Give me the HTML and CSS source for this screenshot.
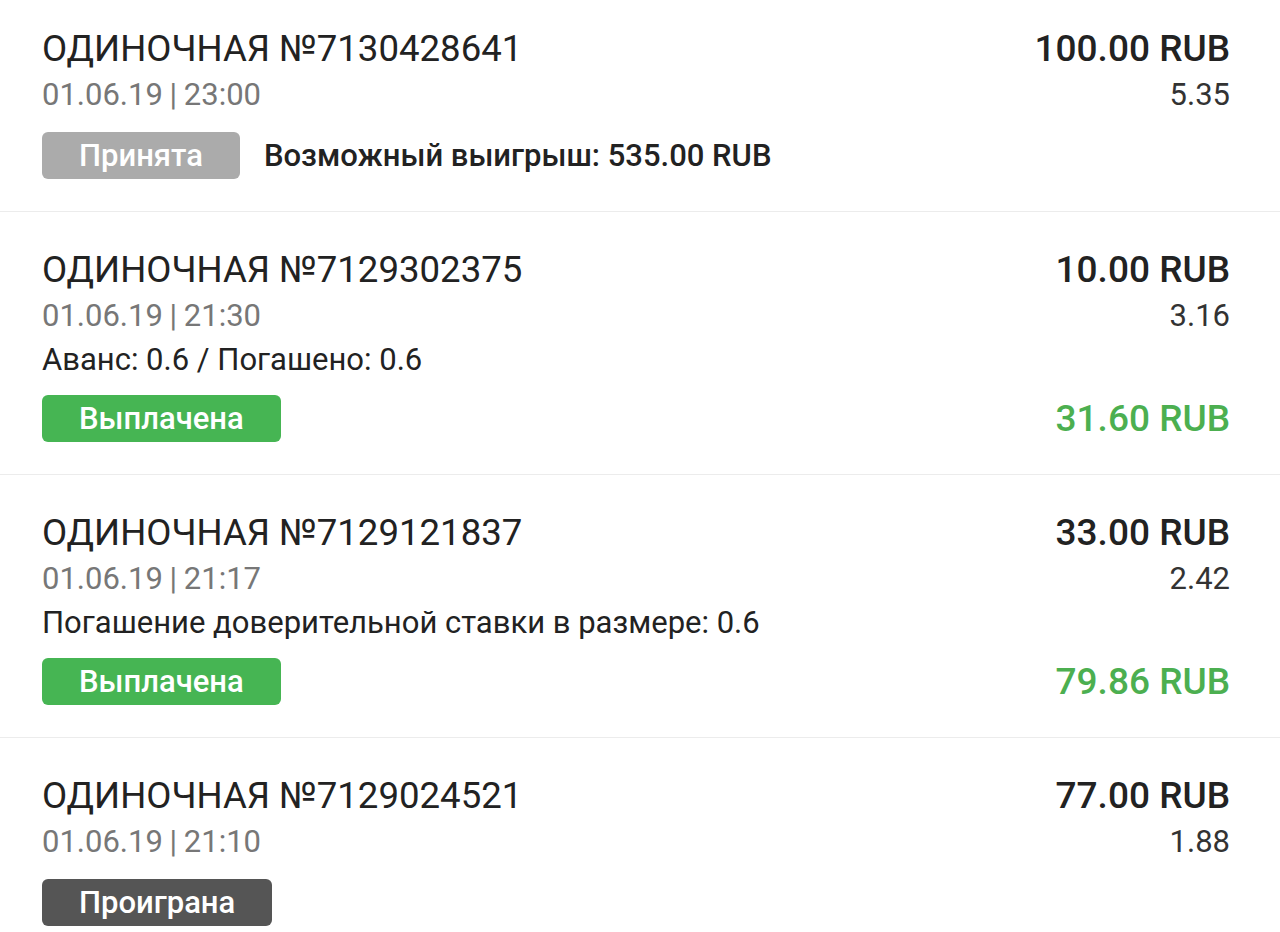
FILE: index.html
```html
<!DOCTYPE html>
<html lang="ru">
<head>
  <meta charset="UTF-8" />
  <title>История ставок</title>
  <link rel="stylesheet" href="styles.css">
</head>
<body>
  <div class="bets">
    <div class="bet first">
      <div class="bet-row">
        <div class="bet-title">ОДИНОЧНАЯ №7130428641</div>
        <div class="bet-sum">100.00 RUB</div>
      </div>
      <div class="bet-row">
        <div class="bet-date">01.06.19 | 23:00</div>
        <div class="bet-coef">5.35</div>
      </div>
      <div class="bet-row bet-foot">
        <div class="foot-left">
          <span class="badge badge-accepted">Принята</span>
          <span class="possible">Возможный выигрыш: 535.00 RUB</span>
        </div>
      </div>
    </div>

    <div class="bet">
      <div class="bet-row">
        <div class="bet-title">ОДИНОЧНАЯ №7129302375</div>
        <div class="bet-sum">10.00 RUB</div>
      </div>
      <div class="bet-row">
        <div class="bet-date">01.06.19 | 21:30</div>
        <div class="bet-coef">3.16</div>
      </div>
      <div class="bet-note">Аванс: 0.6 / Погашено: 0.6</div>
      <div class="bet-row bet-foot">
        <span class="badge badge-paid">Выплачена</span>
        <div class="payout">31.60 RUB</div>
      </div>
    </div>

    <div class="bet">
      <div class="bet-row">
        <div class="bet-title">ОДИНОЧНАЯ №7129121837</div>
        <div class="bet-sum">33.00 RUB</div>
      </div>
      <div class="bet-row">
        <div class="bet-date">01.06.19 | 21:17</div>
        <div class="bet-coef">2.42</div>
      </div>
      <div class="bet-note">Погашение доверительной ставки в размере: 0.6</div>
      <div class="bet-row bet-foot">
        <span class="badge badge-paid">Выплачена</span>
        <div class="payout">79.86 RUB</div>
      </div>
    </div>

    <div class="bet">
      <div class="bet-row">
        <div class="bet-title">ОДИНОЧНАЯ №7129024521</div>
        <div class="bet-sum">77.00 RUB</div>
      </div>
      <div class="bet-row">
        <div class="bet-date">01.06.19 | 21:10</div>
        <div class="bet-coef">1.88</div>
      </div>
      <div class="bet-row bet-foot">
        <span class="badge badge-lost">Проиграна</span>
      </div>
    </div>
  </div>
</body>
</html>
```

FILE: styles.css
```css
body {
  margin: 0;
  padding: 0;
  background: #fff;
  font-family: Roboto, 'Noto Sans', sans-serif;
  color: #212121;
  overflow: hidden;
}
.bet {
  padding: 35px 50px 32px 42px;
  border-bottom: 1px solid #ececec;
}
.bet.first {
  padding-top: 26px;
}
.bet-row {
  display: flex;
  justify-content: space-between;
  align-items: center;
}
.bet-title {
  font-size: 36.6px;
  line-height: 46px;
  color: #222;
}
.bet-sum {
  font-size: 37px;
  line-height: 46px;
  font-weight: 500;
  color: #222;
}
.bet-date {
  font-size: 31px;
  line-height: 46px;
  color: #777;
  word-spacing: -1px;
}
.bet-coef {
  font-size: 31px;
  line-height: 46px;
  color: #333;
}
.bet-note {
  font-size: 31px;
  line-height: 42px;
  color: #222;
}
.bet-foot {
  margin-top: 14px;
}
.foot-left {
  display: flex;
  align-items: center;
  gap: 24px;
}
.badge {
  display: inline-block;
  height: 47px;
  line-height: 47px;
  padding: 0 37px;
  border-radius: 6px;
  font-size: 31px;
  font-weight: 500;
  color: #fff;
}
.badge-accepted {
  background: #ababab;
}
.badge-paid {
  background: #46b553;
}
.badge-lost {
  background: #555;
}
.possible {
  font-size: 31px;
  font-weight: 500;
  color: #222;
}
.payout {
  font-size: 37px;
  font-weight: 500;
  color: #4caf50;
}
```
